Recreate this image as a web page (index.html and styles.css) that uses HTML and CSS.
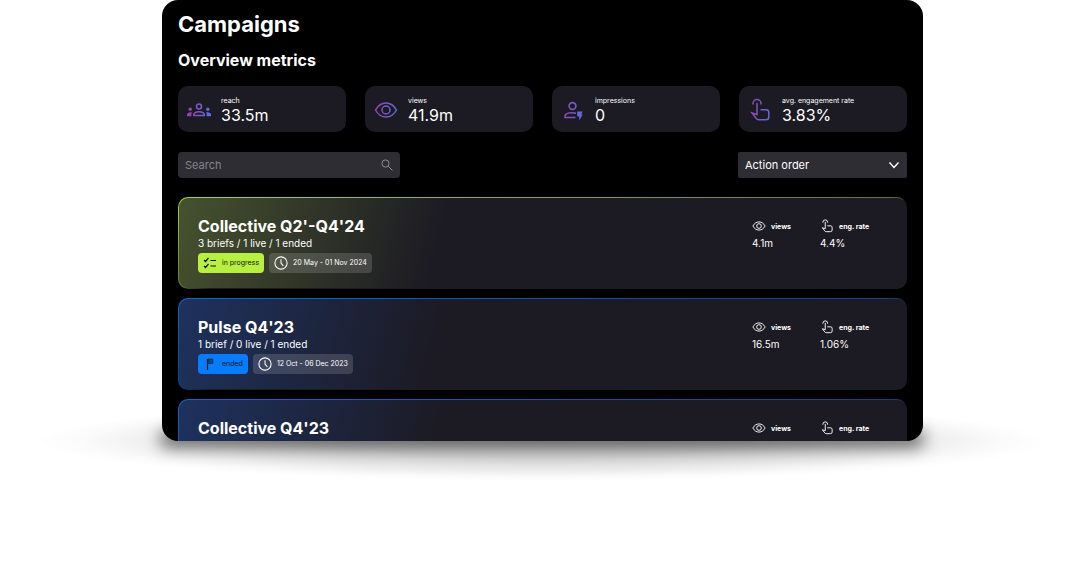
FILE: index.html
```html
<!DOCTYPE html>
<html lang="en">
<head>
<meta charset="utf-8">
<title>Campaigns</title>
<meta name="viewport" content="width=device-width, initial-scale=1">
<link rel="stylesheet" href="styles.css">
</head>
<body>
<svg class="defs" aria-hidden="true">
  <defs>
    <linearGradient id="violet" gradientUnits="userSpaceOnUse" x1="0" y1="0" x2="24" y2="0">
      <stop offset="0" stop-color="#9b3fa8"/><stop offset="1" stop-color="#5b6fe8"/>
    </linearGradient>
    <symbol id="eye" viewBox="0 0 24 24">
      <path d="M1.500 12C4 7.500 7.500 5 12 5S20 7.500 22.500 12C20 16.500 16.500 19 12 19S4 16.500 1.500 12Z"/>
      <circle cx="12" cy="12" r="4"/>
    </symbol>
    <symbol id="tap" viewBox="0 0 24 24">
      <path d="M5 6.500V5.500a4 4 0 0 1 8 0V6.500M9 5V16.500L4 15L8.500 20.800q.8.900 2 .900h7.500q2.800 0 2.800-2.800V14.300q0-2.600-2.800-2.600H12.500"/>
    </symbol>
    <symbol id="clock" viewBox="0 0 24 24">
      <circle cx="12" cy="12" r="10.500"/><path d="M12 5.500V12l4 5"/>
    </symbol>
  </defs>
</svg>
<div class="stage">
<main class="panel">
  <h1 class="title">Campaigns</h1>
  <h2 class="subtitle">Overview metrics</h2>

  <section class="metrics">
    <div class="metric">
      <svg class="metric-icon" viewBox="0 0 24 24"><g fill="none" stroke="url(#violet)" stroke-width="1.500"><circle cx="12" cy="8.500" r="2.500"/><path d="M6.700 17.500V16.500Q7.500 13.700 12 13.700T17.300 16.500V17.500Z"/></g><g fill="url(#violet)"><circle cx="3.200" cy="11.200" r="1.700"/><circle cx="20.800" cy="11.200" r="1.700"/><path d="M0 18.200V16Q.8 13.800 4.800 14.200Q4.300 15.500 4.300 18.200ZM24 18.200V16Q23.200 13.800 19.200 14.200Q19.700 15.500 19.700 18.200Z"/></g></svg>
      <div><div class="metric-label">reach</div><div class="metric-value">33.5m</div></div>
    </div>
    <div class="metric">
      <svg class="metric-icon line"><use href="#eye"/></svg>
      <div><div class="metric-label">views</div><div class="metric-value">41.9m</div></div>
    </div>
    <div class="metric">
      <svg class="metric-icon" viewBox="0 0 24 24"><g fill="none" stroke="url(#violet)" stroke-width="1.600"><circle cx="11.500" cy="8" r="3.400"/><path d="M15 15.200Q8 14 5 16.200Q3.800 17 4 19.500H14.500"/></g><path fill="url(#violet)" d="M16.200 13.500H21.700L20.200 16.500H21.700L18.200 22.500V18.500H16.200Z"/></svg>
      <div><div class="metric-label">impressions</div><div class="metric-value">0</div></div>
    </div>
    <div class="metric">
      <svg class="metric-icon line"><use href="#tap"/></svg>
      <div><div class="metric-label">avg. engagement rate</div><div class="metric-value">3.83%</div></div>
    </div>
  </section>

  <form class="filters">
    <div class="search">
      <input class="search-input" type="text" placeholder="Search" aria-label="Search">
      <svg class="search-icon" viewBox="0 0 12 12"><circle cx="4.500" cy="4.500" r="3.600"/><path d="M7.200 7.200L11.500 11.500"/></svg>
    </div>
    <div class="order">
      <select class="order-select" aria-label="Sort campaigns"><option>Action order</option></select>
      <svg class="order-icon" viewBox="0 0 12 12"><path d="M1.500 3.500L6 8.500L10.500 3.500"/></svg>
    </div>
  </form>

  <section class="campaigns">
    <article class="campaign live">
      <div class="info">
        <h3 class="name">Collective Q2'-Q4'24</h3>
        <p class="summary">3 briefs / 1 live / 1 ended</p>
        <div class="tags">
          <span class="tag status"><svg class="tag-icon" viewBox="0 0 14 14"><path d="M1 4l1.500 1.500L5.500 2M1 10l1.500 1.500L5.500 8M7.500 4.500H13M7.500 10H13"/></svg>in progress</span>
          <span class="tag date"><svg class="tag-icon"><use href="#clock"/></svg>20 May - 01 Nov 2024</span>
        </div>
      </div>
      <dl class="stats">
        <div class="stat"><dt class="stat-label"><svg class="stat-icon"><use href="#eye"/></svg>views</dt><dd class="stat-value">4.1m</dd></div>
        <div class="stat"><dt class="stat-label"><svg class="stat-icon"><use href="#tap"/></svg>eng. rate</dt><dd class="stat-value">4.4%</dd></div>
      </dl>
    </article>
    <article class="campaign done">
      <div class="info">
        <h3 class="name">Pulse Q4'23</h3>
        <p class="summary">1 brief / 0 live / 1 ended</p>
        <div class="tags">
          <span class="tag status"><svg class="tag-icon" viewBox="0 0 14 14"><path d="M4.500 13V2"/><path class="solid" d="M5 2h5v4.500H5Z"/></svg>ended</span>
          <span class="tag date"><svg class="tag-icon"><use href="#clock"/></svg>12 Oct - 06 Dec 2023</span>
        </div>
      </div>
      <dl class="stats">
        <div class="stat"><dt class="stat-label"><svg class="stat-icon"><use href="#eye"/></svg>views</dt><dd class="stat-value">16.5m</dd></div>
        <div class="stat"><dt class="stat-label"><svg class="stat-icon"><use href="#tap"/></svg>eng. rate</dt><dd class="stat-value">1.06%</dd></div>
      </dl>
    </article>
    <article class="campaign done">
      <div class="info">
        <h3 class="name">Collective Q4'23</h3>
      </div>
      <dl class="stats">
        <div class="stat"><dt class="stat-label"><svg class="stat-icon"><use href="#eye"/></svg>views</dt></div>
        <div class="stat"><dt class="stat-label"><svg class="stat-icon"><use href="#tap"/></svg>eng. rate</dt></div>
      </dl>
    </article>
  </section>
</main>
</div>
</body>
</html>
```
FILE: styles.css
```css
* { box-sizing: border-box; }
body {
  margin: 0;
  min-height: 100vh;
  background: #fff;
  color: #fff;
  font-family: Inter, "Liberation Sans", sans-serif;
}
.defs { position: absolute; width: 0; height: 0; }
h1, h2, h3, p, dl, dd { margin: 0; }

.stage {
  position: relative;
  padding: 0 161px 0 162px;
}
.stage::before, .stage::after {
  content: "";
  position: absolute;
  z-index: -1;
}
.stage::before {
  left: 36px;
  right: 36px;
  bottom: -40px;
  height: 80px;
  background: radial-gradient(closest-side, rgba(0,0,0,.22), rgba(0,0,0,.18) 40%, rgba(0,0,0,.09) 70%, rgba(0,0,0,.02) 90%, transparent);
}
.stage::after {
  left: 160px;
  right: 160px;
  bottom: -6px;
  height: 16px;
  border-radius: 8px;
  background: rgba(0,0,0,.6);
  filter: blur(8px);
}
.panel {
  position: relative;
  height: calc(100vh - 129px);
  overflow: hidden;
  padding: 12px 16px 0;
  border-radius: 16px;
  background: #000;
}
.title { font-size: 22px; line-height: 24px; font-weight: 700; }
.subtitle { margin-top: 14px; font-size: 16px; line-height: 20px; font-weight: 700; }

.metrics {
  display: grid;
  grid-template-columns: repeat(4, 1fr);
  gap: 19px;
  margin-top: 16px;
}
.metric {
  display: flex;
  align-items: center;
  gap: 10px;
  height: 46px;
  padding: 1px 10px 0 9px;
  border-radius: 10px;
  background: #1c1a23;
}
.metric-icon { width: 24px; height: 24px; flex: none; }
.line { fill: none; stroke: url(#violet); stroke-width: 1.5; }
.metric-label { font-size: 7px; line-height: 10px; }
.metric-value { font-size: 16px; line-height: 18px; }

.filters {
  display: flex;
  justify-content: space-between;
  margin-top: 20px;
}
.search { position: relative; width: 222px; }
.order { position: relative; width: 169px; }
.search-input, .order-select {
  display: block;
  width: 100%;
  height: 26px;
  padding: 0 7px;
  border: 0;
  border-radius: 4px;
  background: #2e2d33;
  color: #fff;
  font: 11px/16px Inter, "Liberation Sans", sans-serif;
  appearance: none;
}
.search-input::placeholder { color: #85848a; opacity: 1; }
.order-select { border-radius: 2px; }
.search-icon, .order-icon {
  position: absolute;
  top: 7px;
  right: 7px;
  width: 12px;
  height: 12px;
  fill: none;
  stroke: #8e8d92;
  pointer-events: none;
}
.order-icon { stroke: #fff; stroke-width: 1.5; }

.campaigns {
  display: grid;
  gap: 9px;
  margin-top: 19px;
}
.campaign {
  display: flex;
  justify-content: space-between;
  min-height: 92px;
  padding: 18px 34px 15px 19px;
  border: 1px solid transparent;
  border-radius: 10px;
  background:
    linear-gradient(105deg, var(--tint), #1c1a23 264px) padding-box,
    linear-gradient(to bottom right, var(--edge), var(--edge-dim) 49%, #1c1a23 52%) border-box;
}
.live { --tint: #46522e; --edge: #a6d63c; --edge-dim: #65753a; --status: #b8f041; }
.done { --tint: #1e325e; --edge: #1268d0; --edge-dim: #114488; --status: #087cff; }
.name { font-size: 16px; line-height: 20px; font-weight: 700; }
.summary { font-size: 10px; line-height: 14px; }
.tags { display: flex; gap: 5px; margin-top: 3px; }
.tag {
  display: flex;
  align-items: center;
  gap: 5px;
  height: 20px;
  padding: 0 5px;
  border-radius: 4px;
  font-size: 7px;
  line-height: 10px;
}
.status { background: var(--status); color: #10150a; }
.date { background: rgba(255,255,255,.15); }
.tag-icon { width: 14px; height: 14px; fill: none; stroke: currentColor; stroke-width: 1.2; }
.date .tag-icon { stroke-width: 1.8; }
.solid { fill: currentColor; fill-opacity: .5; stroke-width: 1; stroke-opacity: .5; }

.stats { display: flex; gap: 16px; }
.stat { width: 52px; }
.stat-label {
  display: flex;
  align-items: center;
  gap: 5px;
  height: 20px;
  font-size: 7px;
  font-weight: 700;
  white-space: nowrap;
}
.stat-icon { width: 14px; height: 14px; flex: none; fill: none; stroke: #fff; stroke-width: 1.6; }
.stat-value { font-size: 10px; line-height: 14px; }
```
